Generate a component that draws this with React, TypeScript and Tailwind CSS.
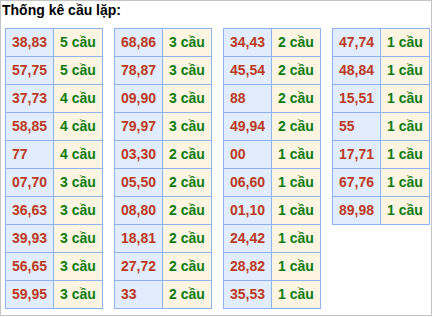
import React from 'react';

type Row = [string, string];

const tables: Row[][] = [
  [
    ['38,83', '5 cầu'],
    ['57,75', '5 cầu'],
    ['37,73', '4 cầu'],
    ['58,85', '4 cầu'],
    ['77', '4 cầu'],
    ['07,70', '3 cầu'],
    ['36,63', '3 cầu'],
    ['39,93', '3 cầu'],
    ['56,65', '3 cầu'],
    ['59,95', '3 cầu'],
  ],
  [
    ['68,86', '3 cầu'],
    ['78,87', '3 cầu'],
    ['09,90', '3 cầu'],
    ['79,97', '3 cầu'],
    ['03,30', '2 cầu'],
    ['05,50', '2 cầu'],
    ['08,80', '2 cầu'],
    ['18,81', '2 cầu'],
    ['27,72', '2 cầu'],
    ['33', '2 cầu'],
  ],
  [
    ['34,43', '2 cầu'],
    ['45,54', '2 cầu'],
    ['88', '2 cầu'],
    ['49,94', '2 cầu'],
    ['00', '1 cầu'],
    ['06,60', '1 cầu'],
    ['01,10', '1 cầu'],
    ['24,42', '1 cầu'],
    ['28,82', '1 cầu'],
    ['35,53', '1 cầu'],
  ],
  [
    ['47,74', '1 cầu'],
    ['48,84', '1 cầu'],
    ['15,51', '1 cầu'],
    ['55', '1 cầu'],
    ['17,71', '1 cầu'],
    ['67,76', '1 cầu'],
    ['89,98', '1 cầu'],
  ],
];

const CauTable: React.FC<{ rows: Row[] }> = ({ rows }) => (
  <table className="w-[98px] table-fixed border-collapse self-start">
    <colgroup>
      <col className="w-[48px]" />
      <col />
    </colgroup>
    <tbody>
      {rows.map(([pair, count]) => (
        <tr key={pair} className="h-[28px]">
          <td className="border border-[#8db2f2] bg-[#e1ecfd] pl-[6px] text-left text-[14px] font-bold text-[#bc3a1c]">
            {pair}
          </td>
          <td className="border border-[#8db2f2] bg-[#fef4e2] pl-[6px] text-left text-[14px] font-bold text-[#0a7d12]">
            {count}
          </td>
        </tr>
      ))}
    </tbody>
  </table>
);

export default function App() {
  return (
    <div className="w-[432px] h-[316px] border border-[#c4c4c4] bg-white font-['Liberation_Sans',Arial,sans-serif]">
      <div className="pl-[1px] pt-[1px] text-[14px] font-bold leading-[17px] text-black">Thống kê cầu lặp:</div>
      <div className="mt-[9px] flex gap-[11px] pl-[4px]">
        {tables.map((rows, i) => (
          <CauTable key={i} rows={rows} />
        ))}
      </div>
    </div>
  );
}
